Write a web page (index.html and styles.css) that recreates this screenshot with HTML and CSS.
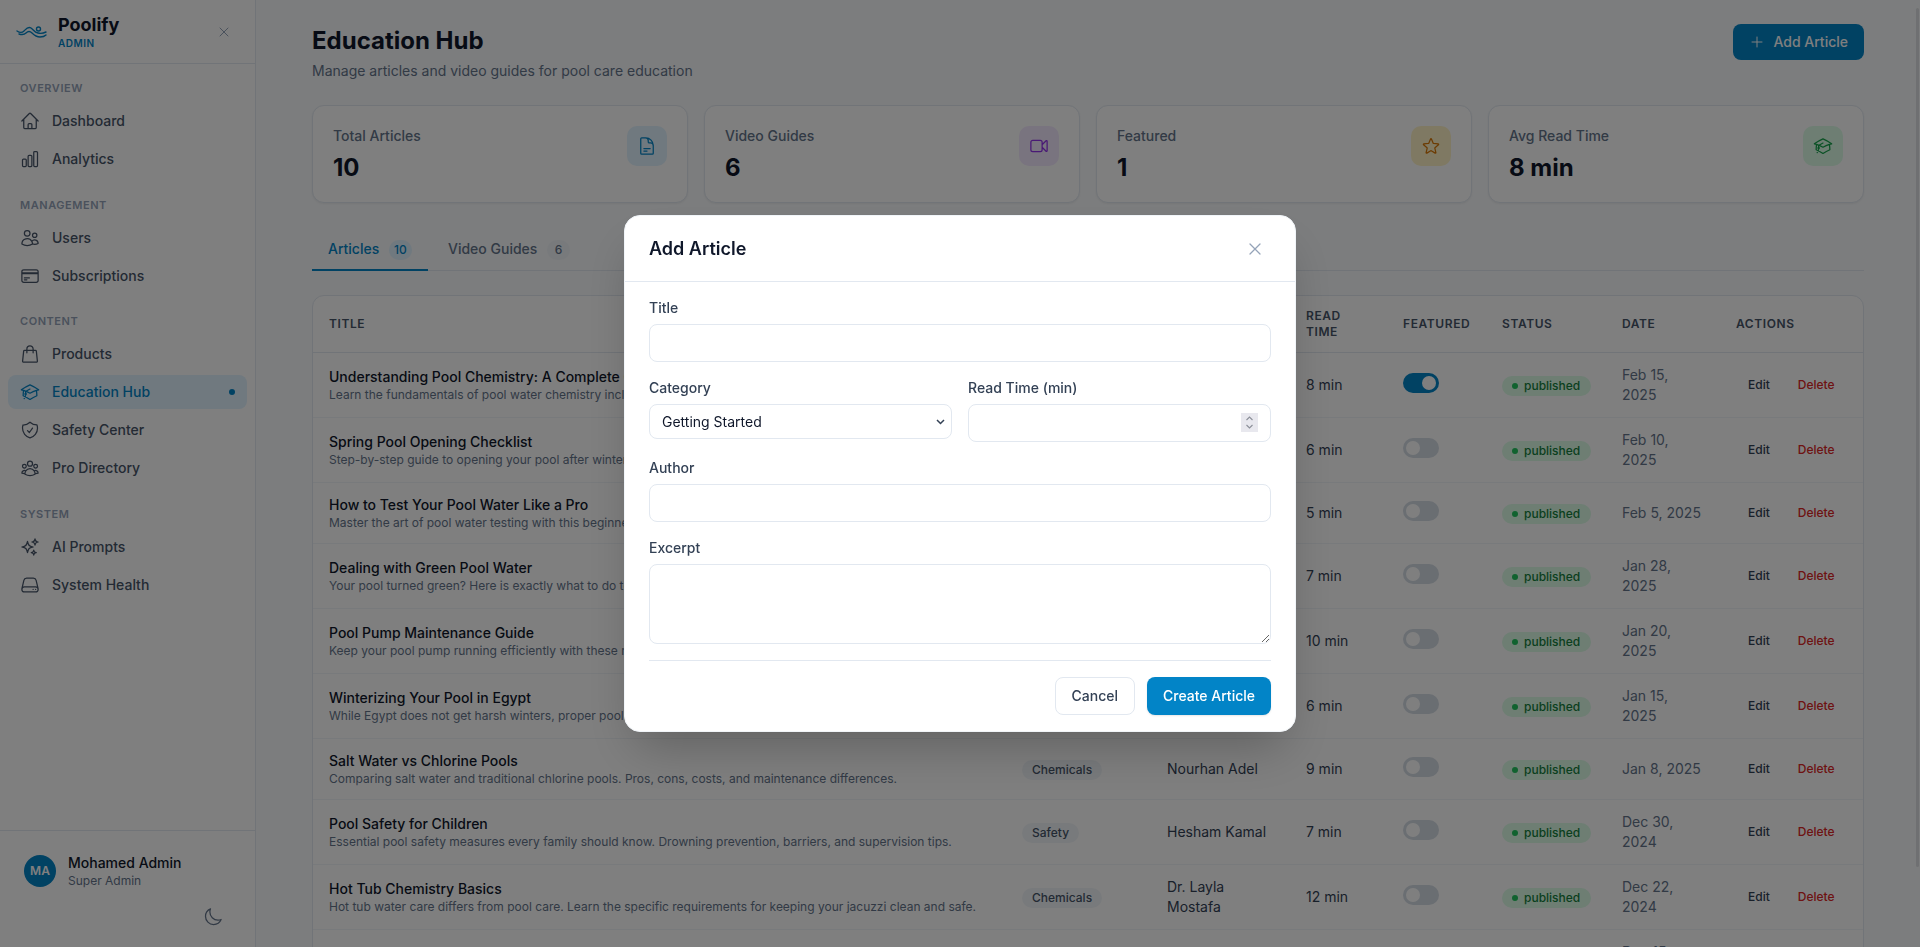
FILE: index.html
```html
<!DOCTYPE html>
<html>
<head>
  <title>Education Hub - Poolify Admin</title>
  <link rel="stylesheet" href="styles.css">
</head>
<body>
  <aside class="sidebar">
    <div class="brand">
      <svg class="brand-logo" viewBox="0 0 32 16" fill="none" stroke="currentColor" stroke-width="1.4" stroke-linecap="round">
        <path d="M1 7c3 2 5 2 7 0s4-5 7-3 3 4 7 5 6 0 8-1"/>
        <path d="M3 10c3 1 5 1 7-1s4-2 6 0 5 4 8 4 5-1 6-2"/>
        <circle cx="22.5" cy="5" r="2"/>
      </svg>
      <div class="brand-text">
        <div class="brand-name">Poolify</div>
        <div class="brand-tag">ADMIN</div>
      </div>
      <svg class="brand-close icon" viewBox="0 0 24 24"><path d="M6 18 18 6M6 6l12 12"/></svg>
    </div>
    <nav class="nav">
      <div class="nav-group">
        <div class="nav-label">OVERVIEW</div>
        <a class="nav-item"><svg class="icon" viewBox="0 0 24 24"><path d="m2.25 12 8.954-8.955c.44-.439 1.152-.439 1.591 0L21.75 12M4.5 9.75v10.125c0 .621.504 1.125 1.125 1.125H9.75v-4.875c0-.621.504-1.125 1.125-1.125h2.25c.621 0 1.125.504 1.125 1.125V21h4.125c.621 0 1.125-.504 1.125-1.125V9.75M8.25 21h8.25"/></svg>Dashboard</a>
        <a class="nav-item"><svg class="icon" viewBox="0 0 24 24"><path d="M3 13.125C3 12.504 3.504 12 4.125 12h2.25c.621 0 1.125.504 1.125 1.125v6.75C7.5 20.496 6.996 21 6.375 21h-2.25A1.125 1.125 0 0 1 3 19.875v-6.75ZM9.75 8.625c0-.621.504-1.125 1.125-1.125h2.25c.621 0 1.125.504 1.125 1.125v11.25c0 .621-.504 1.125-1.125 1.125h-2.25a1.125 1.125 0 0 1-1.125-1.125V8.625ZM16.5 4.125c0-.621.504-1.125 1.125-1.125h2.25C20.496 3 21 3.504 21 4.125v15.75c0 .621-.504 1.125-1.125 1.125h-2.25a1.125 1.125 0 0 1-1.125-1.125V4.125Z"/></svg>Analytics</a>
      </div>
      <div class="nav-group">
        <div class="nav-label">MANAGEMENT</div>
        <a class="nav-item"><svg class="icon" viewBox="0 0 24 24"><path d="M15 19.128a9.38 9.38 0 0 0 2.625.372 9.337 9.337 0 0 0 4.121-.952 4.125 4.125 0 0 0-7.533-2.493M15 19.128v-.003c0-1.113-.285-2.16-.786-3.07M15 19.128v.106A12.318 12.318 0 0 1 8.624 21c-2.331 0-4.512-.645-6.374-1.766l-.001-.109a6.375 6.375 0 0 1 11.964-3.07M12 6.375a3.375 3.375 0 1 1-6.75 0 3.375 3.375 0 0 1 6.75 0Zm8.25 2.25a2.625 2.625 0 1 1-5.25 0 2.625 2.625 0 0 1 5.25 0Z"/></svg>Users</a>
        <a class="nav-item"><svg class="icon" viewBox="0 0 24 24"><path d="M2.25 8.25h19.5M2.25 9h19.5m-16.5 5.25h6m-6 2.25h3m-3.75 3h15a2.25 2.25 0 0 0 2.25-2.25V6.75A2.25 2.25 0 0 0 19.5 4.5h-15a2.25 2.25 0 0 0-2.25 2.25v10.5A2.25 2.25 0 0 0 4.5 19.5Z"/></svg>Subscriptions</a>
      </div>
      <div class="nav-group">
        <div class="nav-label">CONTENT</div>
        <a class="nav-item"><svg class="icon" viewBox="0 0 24 24"><path d="M15.75 10.5V6a3.75 3.75 0 1 0-7.5 0v4.5m11.356-1.993 1.263 12c.07.665-.45 1.243-1.119 1.243H4.25a1.125 1.125 0 0 1-1.12-1.243l1.264-12A1.125 1.125 0 0 1 5.513 7.5h12.974c.576 0 1.059.435 1.119 1.007Z"/></svg>Products</a>
        <a class="nav-item nav-item-active"><svg class="icon" viewBox="0 0 24 24"><path d="M4.26 10.147a60.438 60.438 0 0 0-.491 6.347A48.62 48.62 0 0 1 12 20.904a48.62 48.62 0 0 1 8.232-4.41 60.46 60.46 0 0 0-.491-6.347m-15.482 0a50.636 50.636 0 0 0-2.658-.813A59.906 59.906 0 0 1 12 3.493a59.903 59.903 0 0 1 10.399 5.84c-.896.248-1.783.52-2.658.814m-15.482 0A50.717 50.717 0 0 1 12 13.489a50.702 50.702 0 0 1 7.74-3.342M6.75 15a.75.75 0 1 0 0-1.5.75.75 0 0 0 0 1.5Zm0 0v-3.675A55.378 55.378 0 0 1 12 8.443m-7.007 11.55A5.981 5.981 0 0 0 6.75 15.75v-1.5"/></svg>Education Hub<span class="nav-dot"></span></a>
        <a class="nav-item"><svg class="icon" viewBox="0 0 24 24"><path d="M9 12.75 11.25 15 15 9.75m-3-7.036A11.959 11.959 0 0 1 3.598 6 11.99 11.99 0 0 0 3 9.749c0 5.592 3.824 10.29 9 11.623 5.176-1.332 9-6.03 9-11.622 0-1.31-.21-2.571-.598-3.751h-.152c-3.196 0-6.1-1.248-8.25-3.285Z"/></svg>Safety Center</a>
        <a class="nav-item"><svg class="icon" viewBox="0 0 24 24"><path d="M18 18.72a9.094 9.094 0 0 0 3.741-.479 3 3 0 0 0-4.682-2.72m.94 3.198.001.031c0 .225-.012.447-.037.666A11.944 11.944 0 0 1 12 21c-2.17 0-4.207-.576-5.963-1.584A6.062 6.062 0 0 1 6 18.719m12 0a5.971 5.971 0 0 0-.941-3.197m0 0A5.995 5.995 0 0 0 12 12.75a5.995 5.995 0 0 0-5.058 2.772m0 0a3 3 0 0 0-4.681 2.72 8.986 8.986 0 0 0 3.74.477m.94-3.197a5.971 5.971 0 0 0-.94 3.197M15 6.75a3 3 0 1 1-6 0 3 3 0 0 1 6 0Zm6 3a2.25 2.25 0 1 1-4.5 0 2.25 2.25 0 0 1 4.5 0Zm-13.5 0a2.25 2.25 0 1 1-4.5 0 2.25 2.25 0 0 1 4.5 0Z"/></svg>Pro Directory</a>
      </div>
      <div class="nav-group">
        <div class="nav-label">SYSTEM</div>
        <a class="nav-item"><svg class="icon" viewBox="0 0 24 24"><path d="M9.813 15.904 9 18.75l-.813-2.846a4.5 4.5 0 0 0-3.09-3.09L2.25 12l2.846-.813a4.5 4.5 0 0 0 3.09-3.09L9 5.25l.813 2.846a4.5 4.5 0 0 0 3.09 3.09L15.75 12l-2.846.813a4.5 4.5 0 0 0-3.09 3.09ZM18.259 8.715 18 9.75l-.259-1.035a3.375 3.375 0 0 0-2.455-2.456L14.25 6l1.036-.259a3.375 3.375 0 0 0 2.455-2.456L18 2.25l.259 1.035a3.375 3.375 0 0 0 2.456 2.456L21.75 6l-1.035.259a3.375 3.375 0 0 0-2.456 2.456ZM16.894 20.567 16.5 21.75l-.394-1.183a2.25 2.25 0 0 0-1.423-1.423L13.5 18.75l1.183-.394a2.25 2.25 0 0 0 1.423-1.423l.394-1.183.394 1.183a2.25 2.25 0 0 0 1.423 1.423l1.183.394-1.183.394a2.25 2.25 0 0 0-1.423 1.423Z"/></svg>AI Prompts</a>
        <a class="nav-item"><svg class="icon" viewBox="0 0 24 24"><path d="M21.75 17.25v-.228a4.5 4.5 0 0 0-.12-1.03l-2.268-9.64a3.375 3.375 0 0 0-3.285-2.602H7.923a3.375 3.375 0 0 0-3.285 2.602l-2.268 9.64a4.5 4.5 0 0 0-.12 1.03v.228m19.5 0a3 3 0 0 1-3 3H5.25a3 3 0 0 1-3-3m19.5 0a3 3 0 0 0-3-3H5.25a3 3 0 0 0-3 3m16.5 0h.008v.008h-.008v-.008Zm-3 0h.008v.008h-.008v-.008Z"/></svg>System Health</a>
      </div>
    </nav>
    <div class="user">
      <div class="user-row">
        <div class="avatar">MA</div>
        <div>
          <div class="user-name">Mohamed Admin</div>
          <div class="user-role">Super Admin</div>
        </div>
      </div>
      <svg class="icon user-theme" viewBox="0 0 24 24"><path d="M21.752 15.002A9.72 9.72 0 0 1 18 15.75c-5.385 0-9.75-4.365-9.75-9.75 0-1.33.266-2.597.748-3.752A9.753 9.753 0 0 0 3 11.25C3 16.635 7.365 21 12.75 21a9.753 9.753 0 0 0 9.002-5.998Z"/></svg>
    </div>
  </aside>

  <main class="main">
    <div class="page-head">
      <div>
        <h1>Education Hub</h1>
        <p class="page-sub">Manage articles and video guides for pool care education</p>
      </div>
      <button class="btn-add"><svg class="icon icon-16" viewBox="0 0 24 24"><path d="M12 4.5v15m7.5-7.5h-15"/></svg>Add Article</button>
    </div>

    <div class="stats">
      <div class="stat">
        <div><div class="stat-label">Total Articles</div><div class="stat-value">10</div></div>
        <div class="stat-icon stat-blue"><svg class="icon" viewBox="0 0 24 24"><path d="M19.5 14.25v-2.625a3.375 3.375 0 0 0-3.375-3.375h-1.5A1.125 1.125 0 0 1 13.5 7.125v-1.5a3.375 3.375 0 0 0-3.375-3.375H8.25m0 12.75h7.5m-7.5 3H12M10.5 2.25H5.625c-.621 0-1.125.504-1.125 1.125v17.25c0 .621.504 1.125 1.125 1.125h12.75c.621 0 1.125-.504 1.125-1.125V11.25a9 9 0 0 0-9-9Z"/></svg></div>
      </div>
      <div class="stat">
        <div><div class="stat-label">Video Guides</div><div class="stat-value">6</div></div>
        <div class="stat-icon stat-purple"><svg class="icon" viewBox="0 0 24 24"><path d="m15.75 10.5 4.72-4.72a.75.75 0 0 1 1.28.53v11.38a.75.75 0 0 1-1.28.53l-4.72-4.72M4.5 18.75h9a2.25 2.25 0 0 0 2.25-2.25v-9a2.25 2.25 0 0 0-2.25-2.25h-9A2.25 2.25 0 0 0 2.25 7.5v9a2.25 2.25 0 0 0 2.25 2.25Z"/></svg></div>
      </div>
      <div class="stat">
        <div><div class="stat-label">Featured</div><div class="stat-value">1</div></div>
        <div class="stat-icon stat-amber"><svg class="icon" viewBox="0 0 24 24"><path d="M11.48 3.499a.562.562 0 0 1 1.04 0l2.125 5.111a.563.563 0 0 0 .475.345l5.518.442c.499.04.701.663.321.988l-4.204 3.602a.563.563 0 0 0-.182.557l1.285 5.385a.562.562 0 0 1-.84.61l-4.725-2.885a.562.562 0 0 0-.586 0L6.982 20.54a.562.562 0 0 1-.84-.61l1.285-5.386a.562.562 0 0 0-.182-.557l-4.204-3.602a.562.562 0 0 1 .321-.988l5.518-.442a.563.563 0 0 0 .475-.345L11.48 3.5Z"/></svg></div>
      </div>
      <div class="stat">
        <div><div class="stat-label">Avg Read Time</div><div class="stat-value">8 min</div></div>
        <div class="stat-icon stat-green"><svg class="icon" viewBox="0 0 24 24"><path d="M4.26 10.147a60.438 60.438 0 0 0-.491 6.347A48.62 48.62 0 0 1 12 20.904a48.62 48.62 0 0 1 8.232-4.41 60.46 60.46 0 0 0-.491-6.347m-15.482 0a50.636 50.636 0 0 0-2.658-.813A59.906 59.906 0 0 1 12 3.493a59.903 59.903 0 0 1 10.399 5.84c-.896.248-1.783.52-2.658.814m-15.482 0A50.717 50.717 0 0 1 12 13.489a50.702 50.702 0 0 1 7.74-3.342M6.75 15a.75.75 0 1 0 0-1.5.75.75 0 0 0 0 1.5Zm0 0v-3.675A55.378 55.378 0 0 1 12 8.443m-7.007 11.55A5.981 5.981 0 0 0 6.75 15.75v-1.5"/></svg></div>
      </div>
    </div>

    <div class="tabs">
      <a class="tab tab-active">Articles <span class="tab-count">10</span></a>
      <a class="tab">Video Guides <span class="tab-count">6</span></a>
    </div>

    <div class="table-card">
      <table class="articles">
        <thead>
          <tr>
            <th class="col-title">Title</th>
            <th class="col-cat">Category</th>
            <th class="col-author">Author</th>
            <th class="col-read">Read Time</th>
            <th class="col-feat">Featured</th>
            <th class="col-status">Status</th>
            <th class="col-date">Date</th>
            <th class="col-actions">Actions</th>
          </tr>
        </thead>
        <tbody id="rows"></tbody>
      </table>
    </div>
  </main>
  <div class="scroll-thumb"></div>

  <div class="overlay">
    <div class="modal">
      <div class="modal-head">
        <h2>Add Article</h2>
        <svg class="icon modal-close" viewBox="0 0 24 24"><path d="M6 18 18 6M6 6l12 12"/></svg>
      </div>
      <div class="modal-body">
        <div class="field">
          <label>Title</label>
          <input type="text" class="control">
        </div>
        <div class="field-row">
          <div class="field">
            <label>Category</label>
            <select class="control-select"><option>Getting Started</option><option>Chemicals</option><option>Safety</option></select>
          </div>
          <div class="field">
            <label>Read Time (min)</label>
            <div class="spin-wrap">
              <input type="number" class="control">
              <svg class="spin" viewBox="0 0 17 19" fill="none" stroke="#8b8f99" stroke-width="1.1"><path d="M5.5 7 8.5 4l3 3M5.5 12l3 3 3-3"/></svg>
            </div>
          </div>
        </div>
        <div class="field">
          <label>Author</label>
          <input type="text" class="control">
        </div>
        <div class="field">
          <label>Excerpt</label>
          <textarea class="control control-area"></textarea>
        </div>
        <div class="modal-foot">
          <button class="btn-cancel">Cancel</button>
          <button class="btn-create">Create Article</button>
        </div>
      </div>
    </div>
  </div>

  <script src="app.js"></script>
</body>
</html>
```

FILE: styles.css
```css
* {
  box-sizing: border-box;
}

html, body {
  height: 100%;
}

body {
  margin: 0;
  display: flex;
  overflow: hidden;
  font-family: Inter, "Liberation Sans", sans-serif;
  font-size: 14px;
  line-height: 20px;
  color: #0f172a;
  background-color: #f8fafc;
}

.icon {
  width: 20px;
  height: 20px;
  flex-shrink: 0;
  fill: none;
  stroke: currentColor;
  stroke-width: 1.5;
  stroke-linecap: round;
  stroke-linejoin: round;
}
.icon-16 {
  width: 16px;
  height: 16px;
}

/* sidebar */
.sidebar {
  width: 256px;
  flex-shrink: 0;
  display: flex;
  flex-direction: column;
  height: 100%;
  background-color: #fff;
  border-right: 1px solid #e2e8f0;
}
.brand {
  height: 64px;
  display: flex;
  align-items: center;
  padding: 0 20px 0 16px;
  border-bottom: 1px solid #e2e8f0;
}
.brand-logo {
  width: 32px;
  height: 16px;
  margin-right: 10px;
  color: #0284c7;
}
.brand-text {
  flex: 1;
}
.brand-name {
  font-size: 18px;
  line-height: 24px;
  font-weight: 700;
}
.brand-tag {
  margin-top: -1px;
  font-size: 10px;
  line-height: 14px;
  font-weight: 600;
  letter-spacing: 0.05em;
  color: #0284c7;
}
.brand-close {
  width: 16px;
  height: 16px;
  margin-right: 3px;
  color: #94a3b8;
}

.nav {
  flex: 1;
  padding: 16px 8px;
}
.nav-group {
  margin-bottom: 20.5px;
}
.nav-label {
  font-size: 11px;
  line-height: 16px;
  font-weight: 600;
  letter-spacing: 0.05em;
  color: #94a3b8;
  padding-left: 12px;
  margin-bottom: 8px;
}
.nav-item {
  display: flex;
  align-items: center;
  gap: 12px;
  padding: 7px 12px;
  margin-bottom: 4px;
  border-radius: 8px;
  font-weight: 500;
  color: #475569;
}
.nav-item:last-child {
  margin-bottom: 0;
}
.nav-item-active {
  color: #0284c7;
  background-color: #e0f2fe;
}
.nav-dot {
  width: 6px;
  height: 6px;
  margin-left: auto;
  border-radius: 50%;
  background-color: #0284c7;
}

.user {
  height: 117px;
  padding: 22px 24px 0;
  border-top: 1px solid #e2e8f0;
  display: flex;
  flex-direction: column;
}
.user-row {
  display: flex;
  align-items: center;
  gap: 12px;
}
.avatar {
  width: 32px;
  height: 32px;
  border-radius: 50%;
  display: flex;
  align-items: center;
  justify-content: center;
  font-size: 12px;
  font-weight: 600;
  color: #fff;
  background-color: #0284c7;
}
.user-name {
  font-weight: 500;
  line-height: 20px;
}
.user-role {
  font-size: 12px;
  line-height: 16px;
  color: #64748b;
}
.user-theme {
  margin: 18px 8px 0 auto;
  color: #64748b;
}

/* main */
.main {
  flex: 1;
  min-width: 0;
  height: 100%;
  overflow: hidden;
  padding: 24px 56px;
}
.scroll-thumb {
  position: fixed;
  top: 8px;
  right: 1px;
  width: 3px;
  height: 859px;
  border-radius: 2px;
  background-color: #dfe1e4;
}
.page-head {
  display: flex;
  justify-content: space-between;
  align-items: flex-start;
  margin-bottom: 24px;
}
h1 {
  margin: 1px 0 4px;
  font-size: 24px;
  line-height: 32px;
  font-weight: 700;
}
.page-sub {
  margin: 0;
  color: #64748b;
}
.btn-add {
  height: 36px;
  display: flex;
  align-items: center;
  gap: 8px;
  padding: 0 16px;
  border: none;
  border-radius: 8px;
  font: inherit;
  font-weight: 500;
  color: #fff;
  background-color: #0284c7;
}

.stats {
  display: grid;
  grid-template-columns: repeat(4, 1fr);
  gap: 16px;
  margin-bottom: 24px;
}
.stat {
  display: flex;
  justify-content: space-between;
  padding: 20px 20px 18px;
  background-color: #fff;
  border: 1px solid #e2e8f0;
  border-radius: 12px;
  box-shadow: 0 1px 2px rgba(0, 0, 0, 0.05);
}
.stat-label {
  font-weight: 500;
  color: #64748b;
  margin-bottom: 6px;
}
.stat-value {
  font-size: 24px;
  line-height: 32px;
  font-weight: 700;
}
.stat-icon {
  width: 40px;
  height: 40px;
  display: flex;
  align-items: center;
  justify-content: center;
  border-radius: 10px;
}
.stat-blue { color: #0284c7; background-color: #e0f2fe; }
.stat-purple { color: #9333ea; background-color: #f3e8ff; }
.stat-amber { color: #d97706; background-color: #fef3c7; }
.stat-green { color: #16a34a; background-color: #dcfce7; }

.tabs {
  display: flex;
  gap: 4px;
  border-bottom: 1px solid #e2e8f0;
  margin-bottom: 24px;
}
.tab {
  padding: 12px 16px 9px;
  margin-bottom: -1px;
  border-bottom: 2px solid transparent;
  font-weight: 500;
  color: #64748b;
}
.tab-active {
  color: #0284c7;
  border-bottom-color: #0284c7;
}
.tab-count {
  display: inline-block;
  min-width: 23px;
  margin-left: 6px;
  padding: 0 4px;
  font-size: 12px;
  line-height: 20px;
  text-align: center;
  border-radius: 10px;
  background-color: #f1f5f9;
}
.tab-active .tab-count {
  background-color: #e0f2fe;
}

.table-card {
  background-color: #fff;
  border: 1px solid #e2e8f0;
  border-radius: 12px;
}
.articles {
  width: 100%;
  table-layout: fixed;
  border-collapse: collapse;
}
.articles th {
  padding: 12px 16px;
  font-size: 12px;
  line-height: 16px;
  font-weight: 600;
  text-align: left;
  text-transform: uppercase;
  letter-spacing: 0.05em;
  color: #475569;
  border-bottom: 1px solid #e2e8f0;
}
.articles td {
  padding: 12px 16px;
  vertical-align: middle;
  border-bottom: 1px solid #f1f5f9;
}
.col-cat { width: 145px; }
.col-author { width: 139px; }
.col-read { width: 97px; }
.col-feat { width: 99px; }
.col-status { width: 120px; }
.col-date { width: 114px; }
.col-actions { width: 143px; }

.a-title {
  font-weight: 500;
  white-space: nowrap;
}
.a-excerpt {
  font-size: 12px;
  line-height: 16px;
  color: #64748b;
  white-space: nowrap;
  overflow: hidden;
}
.chip {
  display: inline-block;
  padding: 0 10px;
  font-size: 12px;
  line-height: 20px;
  font-weight: 500;
  color: #475569;
  border-radius: 10px;
  background-color: #f1f5f9;
}
.cell-text {
  color: #334155;
}
.cell-date {
  color: #64748b;
}
.toggle {
  display: block;
  position: relative;
  width: 36px;
  height: 20px;
  margin-top: -4px;
  border-radius: 10px;
  background-color: #d5dce5;
}
.toggle::after {
  content: "";
  position: absolute;
  top: 3px;
  left: 3px;
  width: 14px;
  height: 14px;
  border-radius: 50%;
  background-color: #fff;
}
.toggle-on {
  background-color: #0284c7;
}
.toggle-on::after {
  left: 19px;
}
.status {
  display: inline-flex;
  align-items: center;
  gap: 6px;
  height: 20px;
  padding: 0 11px 0 10px;
  font-size: 12px;
  font-weight: 500;
  color: #15803d;
  border-radius: 10px;
  background-color: #dcfce7;
  vertical-align: middle;
}
.status::before {
  content: "";
  width: 6px;
  height: 6px;
  border-radius: 50%;
  background-color: #22c55e;
}
.actions {
  display: flex;
  gap: 8px;
  margin-left: 2px;
}
.action {
  padding: 0 10px;
  font-size: 12px;
  font-weight: 500;
  color: #334155;
}
.action-danger {
  color: #dc2626;
}

/* modal */
.overlay {
  position: fixed;
  top: 0;
  right: 0;
  bottom: 0;
  left: 0;
  display: flex;
  align-items: center;
  justify-content: center;
  background-color: rgba(0, 0, 0, 0.5);
}
.modal {
  width: 672px;
  background-color: #fff;
  border: 1px solid #f1f5f9;
  border-radius: 16px;
  box-shadow: 0 25px 50px -12px rgba(0, 0, 0, 0.25);
}
.modal-head {
  display: flex;
  align-items: center;
  justify-content: space-between;
  height: 66px;
  padding: 0 24px;
  border-bottom: 1px solid #e2e8f0;
}
h2 {
  margin: 0;
  font-size: 18px;
  line-height: 28px;
  font-weight: 600;
}
.modal-close {
  margin-right: 6px;
  color: #94a3b8;
}
.modal-body {
  display: flex;
  flex-direction: column;
  gap: 16px;
  padding: 16px 24px;
}
.field-row {
  display: grid;
  grid-template-columns: 1fr 1fr;
  gap: 16px;
  align-items: start;
}
.field label {
  display: block;
  margin-bottom: 6px;
  font-weight: 500;
  color: #334155;
}
.control {
  display: block;
  width: 100%;
  height: 38px;
  padding: 8px 12px;
  font: inherit;
  color: #0f172a;
  background-color: #fff;
  border: 1px solid #e2e8f0;
  border-radius: 8px;
}
.control::-webkit-inner-spin-button {
  appearance: none;
}
.spin-wrap {
  position: relative;
}
.spin {
  position: absolute;
  top: 9px;
  right: 13px;
  width: 17px;
  height: 19px;
  background-color: #e8e8ee;
}
.control-area {
  height: 80px;
}
.control-select {
  display: block;
  width: 100%;
  padding: 8px 12px;
  appearance: none;
  font-family: inherit;
  font-size: 14px;
  color: #0f172a;
  background: #fff url("data:image/svg+xml,%3Csvg xmlns='http://www.w3.org/2000/svg' viewBox='0 0 9 6' fill='none' stroke='%23334155' stroke-width='1.5'%3E%3Cpath d='M1 1l3.5 3.5L8 1'/%3E%3C/svg%3E") no-repeat right 6px center / 9px 6px;
  border: 1px solid #e2e8f0;
  border-radius: 8px;
}
.modal-foot {
  display: flex;
  justify-content: flex-end;
  gap: 12px;
  padding-top: 16px;
  border-top: 1px solid #e2e8f0;
}
.btn-cancel,
.btn-create {
  height: 38px;
  padding: 0 16px;
  font: inherit;
  font-weight: 500;
  border-radius: 8px;
}
.btn-cancel {
  color: #334155;
  background-color: #fff;
  border: 1px solid #e2e8f0;
}
.btn-create {
  color: #fff;
  background-color: #0284c7;
  border: none;
  box-shadow: 0 1px 2px rgba(0, 0, 0, 0.1);
}
```

FILE: app.js
```js
const articles = [
  ['Understanding Pool Chemistry: A Complete Guide', 'Learn the fundamentals of pool water chemistry including pH, chlorine, and alkalinity.', 'Chemicals', 'Dr. Layla Mostafa', '8 min', 'Feb 15, 2025', true],
  ['Spring Pool Opening Checklist', 'Step-by-step guide to opening your pool after winter. Covers cleaning and balancing.', 'Getting Started', 'Ahmed Hassan', '6 min', 'Feb 10, 2025', false],
  ['How to Test Your Pool Water Like a Pro', 'Master the art of pool water testing with this beginner friendly walkthrough.', 'Maintenance', 'Nourhan Adel', '5 min', 'Feb 5, 2025', false],
  ['Dealing with Green Pool Water', 'Your pool turned green? Here is exactly what to do to clear it up fast.', 'Troubleshooting', 'Hesham Kamal', '7 min', 'Jan 28, 2025', false],
  ['Pool Pump Maintenance Guide', 'Keep your pool pump running efficiently with these maintenance tips.', 'Equipment', 'Ahmed Hassan', '10 min', 'Jan 20, 2025', false],
  ['Winterizing Your Pool in Egypt', 'While Egypt does not get harsh winters, proper pool care still matters.', 'Seasonal', 'Nourhan Adel', '6 min', 'Jan 15, 2025', false],
  ['Salt Water vs Chlorine Pools', 'Comparing salt water and traditional chlorine pools. Pros, cons, costs, and maintenance differences.', 'Chemicals', 'Nourhan Adel', '9 min', 'Jan 8, 2025', false],
  ['Pool Safety for Children', 'Essential pool safety measures every family should know. Drowning prevention, barriers, and supervision tips.', 'Safety', 'Hesham Kamal', '7 min', 'Dec 30, 2024', false],
  ['Hot Tub Chemistry Basics', 'Hot tub water care differs from pool care. Learn the specific requirements for keeping your jacuzzi clean and safe.', 'Chemicals', 'Dr. Layla Mostafa', '12 min', 'Dec 22, 2024', false],
  ['Pool Lighting Options', 'A look at the lighting choices available for residential pools.', 'Equipment', 'Ahmed Hassan', '6 min', 'Dec 15, 2024', false]
];

document.getElementById('rows').innerHTML = articles.map((a) => `
  <tr>
    <td><div class="a-title">${a[0]}</div><div class="a-excerpt">${a[1]}</div></td>
    <td><span class="chip">${a[2]}</span></td>
    <td class="cell-text">${a[3]}</td>
    <td class="cell-text">${a[4]}</td>
    <td><span class="toggle ${a[6] ? 'toggle-on' : ''}"></span></td>
    <td><span class="status">published</span></td>
    <td class="cell-date">${a[5]}</td>
    <td><div class="actions"><span class="action">Edit</span><span class="action action-danger">Delete</span></div></td>
  </tr>`
).join('');
```
